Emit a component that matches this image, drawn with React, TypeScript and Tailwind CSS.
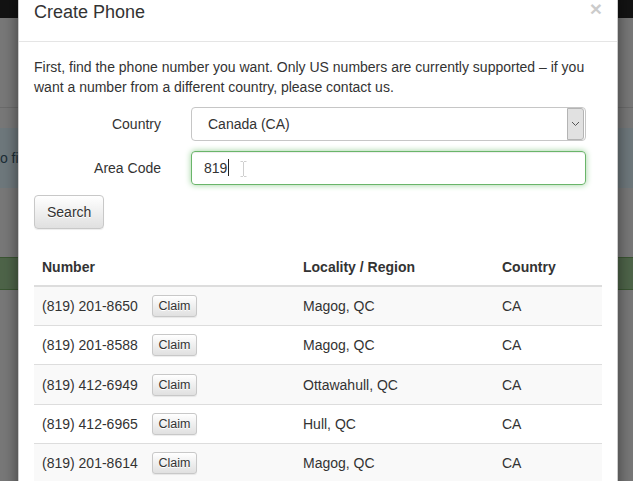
import React from 'react';

const numbers = [
  { number: '(819) 201-8650', locality: 'Magog, QC', country: 'CA' },
  { number: '(819) 201-8588', locality: 'Magog, QC', country: 'CA' },
  { number: '(819) 412-6949', locality: 'Ottawahull, QC', country: 'CA' },
  { number: '(819) 412-6965', locality: 'Hull, QC', country: 'CA' },
  { number: '(819) 201-8614', locality: 'Magog, QC', country: 'CA' },
];

const App: React.FC = () => {
  return (
    <div className="relative h-[481px] w-[633px] overflow-hidden bg-[#787878] font-['Liberation_Sans',Arial,sans-serif]">
      {/* page under the backdrop */}
      <div className="h-[18px] bg-[#131313]" />
      <div className="h-[89px]" />
      <div className="h-px bg-[#6b6b6b]" />
      <div className="h-[20px]" />
      <div className="flex h-[60px] items-center bg-[#6e787c] text-[14px] text-[#1b2d36]">
        <span className="ml-[-4px] whitespace-nowrap">to find a number</span>
      </div>
      <div className="h-[69px]" />
      <div className="h-[33px] border-y border-[#3a5532] bg-[#4e6449]" />

      {/* modal */}
      <div className="absolute left-[18px] top-[-16px] w-[600px] rounded-[6px] border border-black/20 bg-white text-[#333] shadow-[0_5px_15px_rgba(0,0,0,0.5)]">
        <div className="border-b border-[#e5e5e5] p-[15px]">
          <button className="float-right mt-[-2px] text-[21px] font-bold leading-none text-black opacity-20 [text-shadow:0_1px_0_#fff]">
            ×
          </button>
          <h4 className="m-0 text-[18px] leading-[1.42857]">Create Phone</h4>
        </div>

        <div className="p-[15px]">
          <p className="mb-[10px] text-[14px] leading-[20px]">
            First, find the phone number you want. Only US numbers are currently supported – if you want a number from a
            different country, please contact us.
          </p>

          <div className="grid grid-cols-[127px_395px] items-center gap-x-[30px] gap-y-[10px] text-[14px]">
            <label className="text-right leading-[20px]">Country</label>
            <div className="flex h-[34px] items-center rounded-[4px] border border-[#c6c6c6] bg-white">
              <span className="flex-1 pl-[16px] leading-[20px]">Canada (CA)</span>
              <span className="mr-px flex h-[32px] w-[17px] items-center justify-center rounded-r-[3px] border border-[#b4b4b4] bg-[#e1e1e1]">
                <svg width="9" height="6" viewBox="0 0 9 6">
                  <polyline points="1,1 4.5,4.5 8,1" fill="none" stroke="#555" strokeWidth="1" />
                </svg>
              </span>
            </div>

            <label className="text-right leading-[20px]">Area Code</label>
            <div className="flex h-[34px] items-center rounded-[4px] border border-[#6ab56a] px-[12px] shadow-[inset_0_1px_1px_rgba(0,0,0,0.075),0_0_6px_#9bd29b]">
              <span className="leading-[20px]">819</span>
              <span className="ml-px h-[17px] w-px bg-[#222]" />
              <svg className="ml-[11px] mt-[3px]" width="7" height="16" viewBox="0 0 7 16">
                <path d="M0.5 0.5h2.5M4 0.5h2.5M3.5 1v14M0.5 15.5h2.5M4 15.5h2.5" fill="none" stroke="#cfcfcf" strokeWidth="1" />
              </svg>
            </div>
          </div>

          <button className="mt-[10px] h-[34px] rounded-[4px] border border-[#c8c8c8] bg-gradient-to-b from-white to-[#e0e0e0] px-[12px] text-[14px] leading-[20px] text-[#333] shadow-[0_1px_1px_rgba(0,0,0,0.075)] [text-shadow:0_1px_0_#fff]">
            Search
          </button>

          <table className="mt-[20px] w-full table-fixed border-collapse text-[14px] leading-[20px]">
            <thead>
              <tr>
                <th className="w-[261px] border-b-2 border-[#ddd] p-[8px] text-left font-bold">Number</th>
                <th className="w-[199px] border-b-2 border-[#ddd] p-[8px] text-left font-bold">Locality / Region</th>
                <th className="border-b-2 border-[#ddd] p-[8px] text-left font-bold">Country</th>
              </tr>
            </thead>
            <tbody>
              {numbers.map((row, i) => (
                <tr key={row.number} className={i % 2 === 0 ? 'bg-[#f9f9f9]' : 'bg-white'}>
                  <td className="border-t border-[#ddd] p-[8px] align-middle">
                    <div className="flex h-[22.4px] items-center">
                      <span className="w-[110px]">{row.number}</span>
                      <button className="h-[22px] w-[45px] rounded-[3px] border border-[#c8c8c8] bg-gradient-to-b from-white to-[#e0e0e0] text-[12.5px] leading-[18px] text-[#333] shadow-[0_1px_1px_rgba(0,0,0,0.075)] [text-shadow:0_1px_0_#fff]">
                        Claim
                      </button>
                    </div>
                  </td>
                  <td className="border-t border-[#ddd] p-[8px] align-middle">{row.locality}</td>
                  <td className="border-t border-[#ddd] p-[8px] align-middle">{row.country}</td>
                </tr>
              ))}
            </tbody>
          </table>
        </div>
      </div>
    </div>
  );
};

export default App;
